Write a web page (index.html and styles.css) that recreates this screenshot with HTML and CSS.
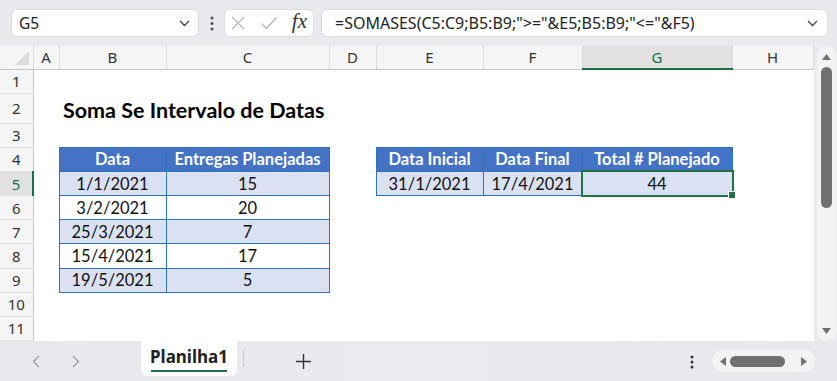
FILE: index.html
```html
<!DOCTYPE html>
<html lang="pt">
<head>
    <meta charset="UTF-8">
    <meta name="viewport" content="width=device-width, initial-scale=1.0">
    <title>Soma Se Intervalo de Datas</title>
    <link rel="stylesheet" href="styles.css">
</head>
<body>
    <div class="app">
        <!-- formula bar -->
        <div class="topbar">
            <div class="namebox">
                <span>G5</span>
                <svg class="chev" width="11" height="7" viewBox="0 0 11 7"><path d="M1 1l4.5 4.5L10 1" fill="none" stroke="#444" stroke-width="1.3"/></svg>
            </div>
            <svg class="vdots" width="4" height="15" viewBox="0 0 4 15"><circle cx="2" cy="2" r="1.6" fill="#555"/><circle cx="2" cy="7.5" r="1.6" fill="#555"/><circle cx="2" cy="13" r="1.6" fill="#555"/></svg>
            <div class="fnbox">
                <svg width="16" height="16" viewBox="0 0 16 16"><path d="M2 2l12 12M14 2L2 14" stroke="#b8b8b8" stroke-width="1.3"/></svg>
                <svg width="18" height="16" viewBox="0 0 18 16"><path d="M1.5 8.5l5 5L16.5 2.5" fill="none" stroke="#b8b8b8" stroke-width="1.3"/></svg>
                <span class="fx">fx</span>
            </div>
            <div class="formula">
                <span>=SOMASES(C5:C9;B5:B9;"&gt;="&amp;E5;B5:B9;"&lt;="&amp;F5)</span>
                <svg class="chev" width="11" height="7" viewBox="0 0 11 7"><path d="M1 1l4.5 4.5L10 1" fill="none" stroke="#444" stroke-width="1.3"/></svg>
            </div>
        </div>

        <!-- sheet -->
        <div class="sheet">
            <table class="grid">
                <colgroup>
                    <col style="width:33px"><col style="width:26px"><col style="width:107px"><col style="width:163px"><col style="width:47px"><col style="width:107px"><col style="width:99px"><col style="width:150px"><col style="width:81px">
                </colgroup>
                <thead>
                    <tr class="hdr">
                        <th class="corner"><span class="tri"></span></th>
                        <th>A</th><th>B</th><th>C</th><th>D</th><th>E</th><th>F</th><th class="colsel">G</th><th>H</th>
                    </tr>
                </thead>
                <tbody>
                    <tr><th class="rh">1</th><td></td><td></td><td></td><td></td><td></td><td></td><td></td><td></td></tr>
                    <tr class="tall"><th class="rh">2</th><td></td><td class="title">Soma Se Intervalo de Datas</td><td></td><td></td><td></td><td></td><td></td><td></td></tr>
                    <tr><th class="rh">3</th><td></td><td></td><td></td><td></td><td></td><td></td><td></td><td></td></tr>
                    <tr><th class="rh">4</th><td></td><td class="t head">Data</td><td class="t head">Entregas Planejadas</td><td></td><td class="t head">Data Inicial</td><td class="t head">Data Final</td><td class="t head">Total # Planejado</td><td></td></tr>
                    <tr><th class="rh rowsel">5</th><td></td><td class="t band">1/1/2021</td><td class="t band">15</td><td></td><td class="t band">31/1/2021</td><td class="t band">17/4/2021</td><td class="t band sel">44</td><td></td></tr>
                    <tr><th class="rh">6</th><td></td><td class="t">3/2/2021</td><td class="t">20</td><td></td><td></td><td></td><td></td><td></td></tr>
                    <tr><th class="rh">7</th><td></td><td class="t band">25/3/2021</td><td class="t band">7</td><td></td><td></td><td></td><td></td><td></td></tr>
                    <tr><th class="rh">8</th><td></td><td class="t">15/4/2021</td><td class="t">17</td><td></td><td></td><td></td><td></td><td></td></tr>
                    <tr><th class="rh">9</th><td></td><td class="t band">19/5/2021</td><td class="t band">5</td><td></td><td></td><td></td><td></td><td></td></tr>
                    <tr><th class="rh">10</th><td></td><td></td><td></td><td></td><td></td><td></td><td></td><td></td></tr>
                    <tr><th class="rh">11</th><td></td><td></td><td></td><td></td><td></td><td></td><td></td><td></td></tr>
                </tbody>
            </table>
            <div class="vscroll">
                <svg width="11" height="8" viewBox="0 0 11 8"><path d="M5.5 1L10 7H1z" fill="#707070"/></svg>
                <div class="vthumb"></div>
                <svg width="11" height="8" viewBox="0 0 11 8"><path d="M5.5 7L10 1H1z" fill="#707070"/></svg>
            </div>
        </div>

        <!-- sheet tabs -->
        <div class="tabbar">
            <div class="nav">
                <svg width="8" height="13" viewBox="0 0 8 13"><path d="M7 1L1.5 6.5 7 12" fill="none" stroke="#9a9a9a" stroke-width="1.2"/></svg>
                <svg width="8" height="13" viewBox="0 0 8 13"><path d="M1 1l5.5 5.5L1 12" fill="none" stroke="#9a9a9a" stroke-width="1.2"/></svg>
            </div>
            <div class="tab">Planilha1</div>
            <div class="sep"></div>
            <svg class="plus" width="15" height="15" viewBox="0 0 15 15"><path d="M7.5 0v15M0 7.5h15" stroke="#333" stroke-width="1.4"/></svg>
            <div class="spacer"></div>
            <svg class="vdots" width="4" height="14" viewBox="0 0 4 14"><circle cx="2" cy="2" r="1.5" fill="#333"/><circle cx="2" cy="7" r="1.5" fill="#333"/><circle cx="2" cy="12" r="1.5" fill="#333"/></svg>
            <div class="hscroll">
                <svg width="8" height="11" viewBox="0 0 8 11"><path d="M1 5.5L7 1v9z" fill="#707070"/></svg>
                <div class="hthumb"></div>
                <svg width="8" height="11" viewBox="0 0 8 11"><path d="M7 5.5L1 1v9z" fill="#707070"/></svg>
            </div>
        </div>
    </div>
</body>
</html>
```

FILE: styles.css
```css
* {
    box-sizing: border-box;
}

body {
    margin: 0;
    background: #e8eaee;
    font-family: "Noto Sans", "Open Sans", sans-serif;
    color: #222;
}

.app {
    width: 837px;
    height: 381px;
    display: flex;
    flex-direction: column;
    overflow: hidden;
}

/* ---------- formula bar ---------- */
.topbar {
    height: 46px;
    display: flex;
    align-items: center;
    padding: 0 9px 0 11px;
}

.namebox,
.fnbox,
.formula {
    height: 28px;
    background: #fff;
    border: 1px solid #dcdde0;
    border-radius: 6px;
    display: flex;
    align-items: center;
}

.namebox {
    width: 188px;
    padding: 0 8px 0 7px;
    justify-content: space-between;
    font-size: 15.5px;
}

.topbar .vdots {
    margin: 0 10px 0 11px;
}

.fnbox {
    width: 90px;
    padding: 0 6px 0 5px;
    justify-content: space-between;
}

.fx {
    font-family: "Liberation Serif", serif;
    font-style: italic;
    font-size: 21px;
    color: #333;
    margin-top: -4px;
}

.formula {
    flex: 1;
    margin-left: 7px;
    padding: 0 9px 0 13px;
    justify-content: space-between;
    font-size: 16px;
    color: #222;
}

/* ---------- grid ---------- */
.sheet {
    height: 295px;
    display: flex;
}

.grid {
    width: 813px;
    table-layout: fixed;
    border-collapse: collapse;
    background: #fff;
    font-family: Lato, "Liberation Sans", sans-serif;
    font-size: 16.5px;
}

.grid th {
    font-weight: normal;
    font-family: "Noto Sans", "Open Sans", sans-serif;
    font-size: 15px;
    color: #333;
    background: #f5f5f5;
    padding: 0;
}

.hdr th {
    height: 23px;
    border-right: 1px solid #dadada;
    border-bottom: 1px solid #c6c6c6;
}

.hdr th.colsel {
    background: #e1e1e1;
    color: #1e7145;
    border-bottom: 2px solid #1e7145;
}

.corner {
    position: relative;
}

.tri {
    position: absolute;
    right: 4px;
    bottom: 4px;
    width: 0;
    height: 0;
    border-left: 14px solid transparent;
    border-bottom: 14px solid #dcdcdc;
}

.grid td {
    height: 24px;
    padding: 0 4px;
    white-space: nowrap;
    overflow: visible;
}

.grid tr.tall td,
.grid tr.tall th {
    height: 30px;
}

.rh {
    border-right: 1px solid #c6c6c6;
    border-bottom: 1px solid #e2e2e2;
    text-align: center;
}

.rh.rowsel {
    background: #e1e1e1;
    color: #1e7145;
    border-right: 2px solid #1e7145;
}

.title {
    font-weight: bold;
    font-size: 21.5px;
    color: #000;
    vertical-align: bottom;
    padding-bottom: 2px;
}

.t {
    border: 1px solid #2f75b5;
    text-align: center;
    color: #111;
}

.t.head {
    background: #4472c4;
    color: #fff;
    font-weight: bold;
}

.t.band {
    background: #d9e1f2;
}

.t.sel {
    position: relative;
}

.t.sel::after {
    content: "";
    position: absolute;
    left: -2px;
    top: -2px;
    right: -2px;
    bottom: -2px;
    border: 2px solid #217346;
}

.t.sel::before {
    content: "";
    position: absolute;
    right: -4px;
    bottom: -4px;
    width: 6px;
    height: 6px;
    background: #217346;
    border: 1px solid #fff;
    z-index: 1;
}

.vscroll {
    width: 19px;
    margin-left: 3px;
    background: #f3f3f3;
    border-radius: 10px;
    display: flex;
    flex-direction: column;
    align-items: center;
    padding: 7px 0 6px;
}

.vthumb {
    width: 11px;
    height: 141px;
    margin-top: 6px;
    background: #707070;
    border-radius: 6px;
}

.vscroll svg:last-child {
    margin-top: auto;
}

/* ---------- tabs ---------- */
.tabbar {
    flex: 1;
    display: flex;
    align-items: flex-start;
    background: linear-gradient(90deg, #e6e8ec, #e9ebef 50%, #e6e8ec);
}

.nav {
    display: flex;
    gap: 32px;
    margin: 14px 0 0 32px;
}

.tab {
    margin-left: 61px;
    width: 96px;
    height: 35px;
    background: #fff;
    border-radius: 0 0 6px 6px;
    font-weight: bold;
    font-size: 17px;
    color: #222;
    text-align: center;
    padding-top: 4px;
    position: relative;
}

.tab::after {
    content: "";
    position: absolute;
    left: 10px;
    right: 10px;
    bottom: 4px;
    height: 2px;
    background: #1e7145;
}

.sep {
    width: 1px;
    height: 17px;
    margin: 9px 0 0 6px;
    background: #c8c8c8;
}

.plus {
    margin: 13px 0 0 52px;
}

.spacer {
    flex: 1;
}

.tabbar .vdots {
    margin: 14px 0 0 0;
}

.hscroll {
    width: 103px;
    height: 22px;
    margin: 9px 22px 0 18px;
    background: #f3f3f3;
    border-radius: 11px;
    display: flex;
    align-items: center;
    padding: 0 7px;
    gap: 3px;
}

.hthumb {
    width: 55px;
    height: 11px;
    background: #707070;
    border-radius: 6px;
}

.hscroll svg:last-child {
    margin-left: auto;
}
```
